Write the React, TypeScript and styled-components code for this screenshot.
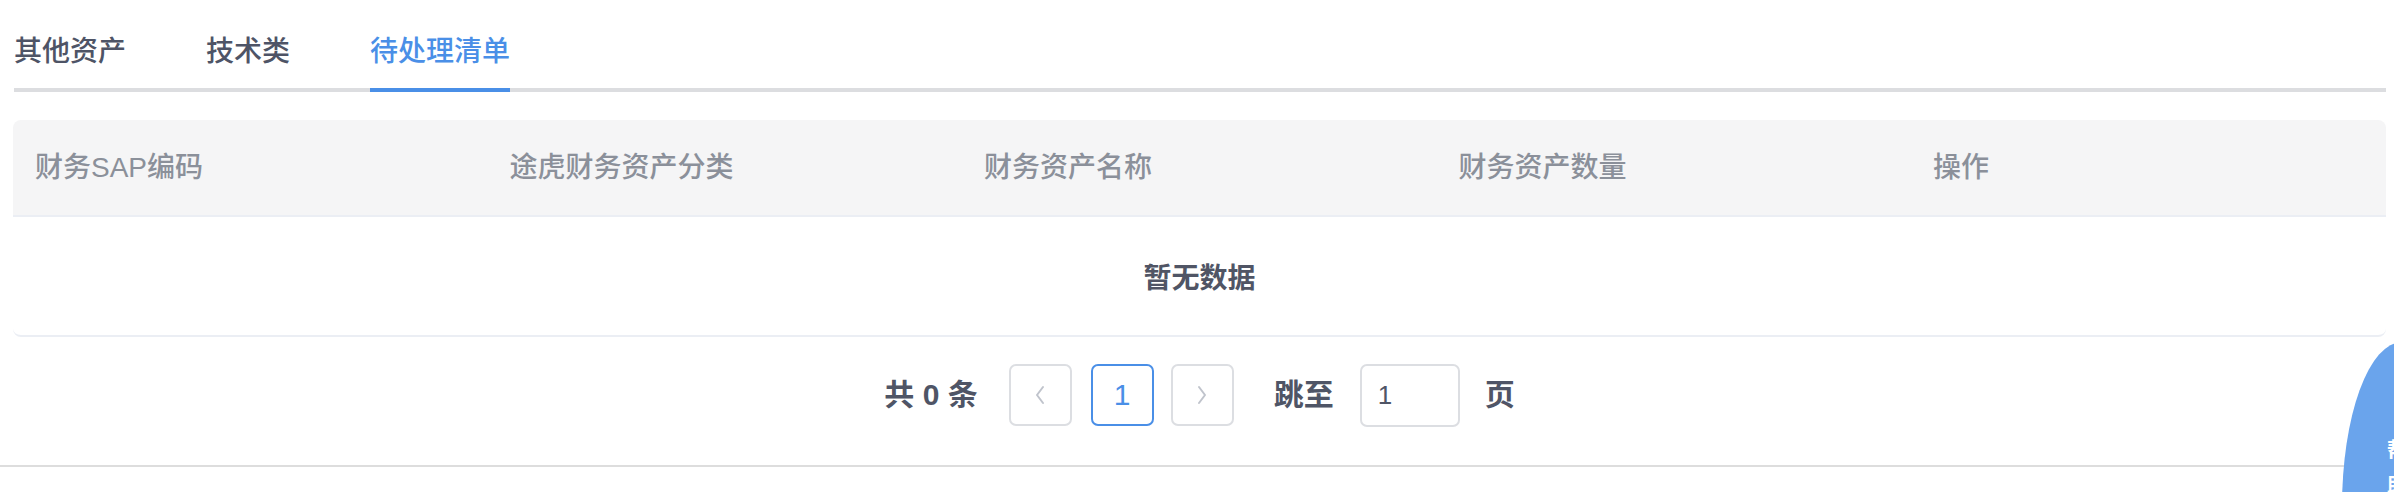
import React, { useState } from "react";
import styled, { createGlobalStyle } from "styled-components";

const GlobalStyle = createGlobalStyle`
  html, body {
    margin: 0;
    padding: 0;
    background: #ffffff;
    overflow: hidden;
  }
  body {
    font-family: "Liberation Sans", "Noto Sans CJK SC", sans-serif;
    color: #4e5466;
  }
  * {
    box-sizing: border-box;
  }
`;

const Page = styled.div`
  width: 100%;
  border-bottom: 2px solid #dddddd;
`;

const Content = styled.div`
  padding: 0 8px 0 13px;
`;

const TabNav = styled.div`
  display: flex;
  gap: 80px;
  margin-left: 1px;
  border-bottom: 4px solid #dcdde0;
`;

const TabItem = styled.div<{ $active?: boolean }>`
  position: relative;
  padding: 38px 0 22px;
  font-size: 28px;
  line-height: 28px;
  font-weight: 500;
  color: ${({ $active }) => ($active ? "#4a8fe7" : "#4e5466")};
  cursor: pointer;

  &::after {
    content: "";
    display: ${({ $active }) => ($active ? "block" : "none")};
    position: absolute;
    left: 0;
    right: 0;
    bottom: -4px;
    height: 4px;
    background: #4a8fe7;
  }
`;

const Table = styled.div`
  margin-top: 28px;
  border-radius: 8px;
  border-bottom: 2px solid #ebeef4;
`;

const HeaderRow = styled.div`
  display: grid;
  grid-template-columns: repeat(4, 474.5px) 1fr;
  height: 97px;
  align-items: center;
  background: #f5f5f6;
  border-radius: 8px 8px 0 0;
  border-bottom: 2px solid #ebeef4;
`;

const HeaderCell = styled.div`
  padding-left: 22px;
  font-size: 28px;
  line-height: 28px;
  font-weight: 500;
  color: #8b909a;
`;

const EmptyRow = styled.div`
  height: 118px;
  display: flex;
  align-items: center;
  justify-content: center;
  font-size: 28px;
  font-weight: 600;
  color: #505565;
`;

const Pager = styled.div`
  display: flex;
  justify-content: center;
  align-items: center;
  padding: 25px 0 38px;
`;

const PagerText = styled.span<{ $gap?: number }>`
  font-size: 30px;
  line-height: 30px;
  font-weight: 600;
  color: #4f5566;
  margin-right: ${({ $gap }) => $gap ?? 0}px;
  white-space: pre;
`;

const PageButton = styled.button<{ $active?: boolean; $gap?: number }>`
  width: 63px;
  height: 62px;
  padding: 0;
  display: flex;
  align-items: center;
  justify-content: center;
  background: #ffffff;
  border: 2px solid ${({ $active }) => ($active ? "#4a8fe7" : "#dcdee2")};
  border-radius: 7px;
  color: ${({ $active }) => ($active ? "#4a8fe7" : "#c0c4cc")};
  font-family: "Liberation Sans", sans-serif;
  font-size: 30px;
  margin-right: ${({ $gap }) => $gap ?? 0}px;
  cursor: pointer;
`;

const JumpInput = styled.input`
  width: 100px;
  height: 63px;
  margin: 2px 25px 0 0;
  padding: 0 0 0 16px;
  border: 2px solid #dcdee2;
  border-radius: 7px;
  font-family: "Liberation Sans", sans-serif;
  font-size: 26px;
  color: #4f5566;
  outline: none;
`;

const HelpBubble = styled.div`
  position: fixed;
  left: 2342px;
  top: 342px;
  width: 120px;
  height: 330px;
  border-radius: 50%;
  background: #6aa4ec;
  padding: 90px 0 0 45px;
  display: flex;
  flex-direction: column;
  color: #ffffff;
  font-size: 21px;
  line-height: 36px;
  font-weight: 700;
`;

const Chevron = ({ dir }: { dir: "left" | "right" }) => (
  <svg width="10" height="20" viewBox="0 0 10 20" fill="none">
    <polyline
      points={dir === "left" ? "8,2 2,10 8,18" : "2,2 8,10 2,18"}
      stroke="#c0c4cc"
      strokeWidth="2"
      strokeLinecap="round"
      strokeLinejoin="round"
    />
  </svg>
);

const tabs = ["其他资产", "技术类", "待处理清单"];
const columns = ["财务SAP编码", "途虎财务资产分类", "财务资产名称", "财务资产数量", "操作"];

export default function App() {
  const [active, setActive] = useState(2);
  const [jump, setJump] = useState("1");

  return (
    <>
      <GlobalStyle />
      <Page>
        <Content>
          <TabNav>
            {tabs.map((t, i) => (
              <TabItem key={t} $active={i === active} onClick={() => setActive(i)}>
                {t}
              </TabItem>
            ))}
          </TabNav>
          <Table>
            <HeaderRow>
              {columns.map((c) => (
                <HeaderCell key={c}>{c}</HeaderCell>
              ))}
            </HeaderRow>
            <EmptyRow>暂无数据</EmptyRow>
          </Table>
          <Pager>
            <PagerText $gap={31}>共 0 条</PagerText>
            <PageButton $gap={19}>
              <Chevron dir="left" />
            </PageButton>
            <PageButton $active $gap={17}>1</PageButton>
            <PageButton $gap={40}>
              <Chevron dir="right" />
            </PageButton>
            <PagerText $gap={26}>跳至</PagerText>
            <JumpInput value={jump} onChange={(e) => setJump(e.target.value)} />
            <PagerText>页</PagerText>
          </Pager>
        </Content>
      </Page>
      <HelpBubble>
        <span>帮</span>
        <span>助</span>
      </HelpBubble>
    </>
  );
}
